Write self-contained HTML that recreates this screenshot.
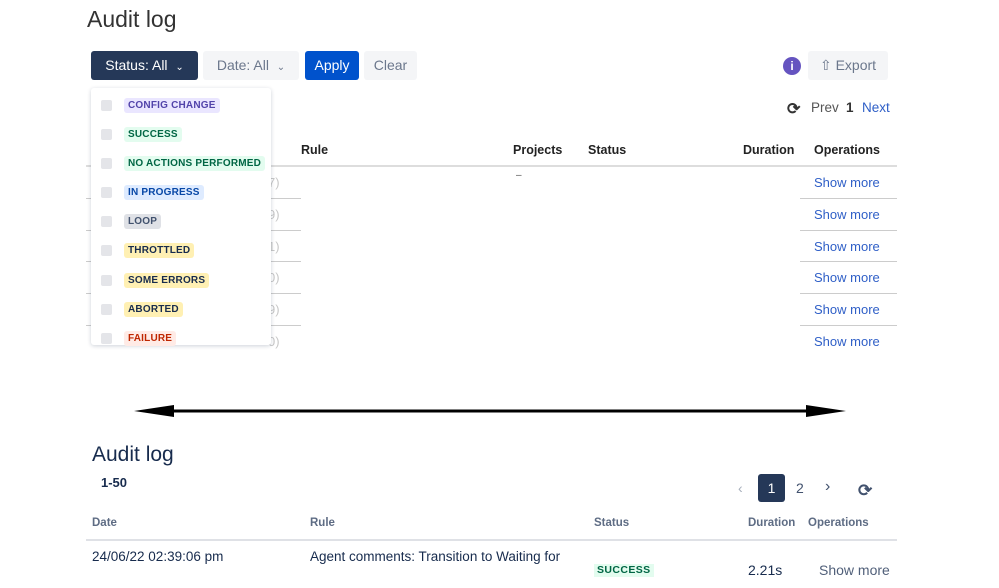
<!DOCTYPE html>
<html><head><meta charset="utf-8"><style>
*{margin:0;padding:0;box-sizing:border-box}
body{width:999px;height:588px;background:#fff;position:relative;overflow:hidden;font-family:"Liberation Sans",Arial,sans-serif;color:#172b4d}
.a{position:absolute;white-space:nowrap}
.btn{position:absolute;height:29px;border-radius:3px;font-size:14px;line-height:29px;text-align:center}
.lz{position:absolute;left:124px;font-size:10px;font-weight:bold;padding:0 4px;height:15px;line-height:15px;border-radius:3px;letter-spacing:.2px}
.cb{position:absolute;left:101px;width:11px;height:11px;border-radius:2px;background:#e4e5e9}
.th{position:absolute;font-size:12.5px;font-weight:bold;color:#222}
.sm{position:absolute;left:814px;font-size:13px;color:#2f5fc7}
.ln{position:absolute;height:1px;background:#ccc}
.g{position:absolute;left:268px;font-size:13px;color:#c8c8c8}
.bh{position:absolute;top:517px;font-size:11.5px;font-weight:bold;color:#5e6c84}
</style></head><body>
<div class="a" style="left:87px;top:6px;font-size:23px;color:#333">Audit log</div>
<div class="btn" style="left:91px;top:51px;width:107px;background:#253858;color:#fff">Status: All &nbsp;<span style="font-size:10px">&#8964;</span></div>
<div class="btn" style="left:203px;top:51px;width:96px;background:#f4f5f7;color:#6b778c">Date: All &nbsp;<span style="font-size:10px">&#8964;</span></div>
<div class="btn" style="left:305px;top:51px;width:54px;background:#0052cc;color:#fff">Apply</div>
<div class="btn" style="left:364px;top:51px;width:53px;background:#f4f5f7;color:#6b778c">Clear</div>
<div class="a" style="left:783px;top:57px;width:18px;height:18px;border-radius:50%;background:#6554c0;color:#fff;font-size:12px;font-weight:bold;text-align:center;line-height:18px">i</div>
<div class="btn" style="left:808px;top:51px;width:80px;background:#f4f5f7;color:#6b778c">&#8679; Export</div>
<div class="a" style="left:787px;top:99px;font-size:16px;font-weight:bold;color:#333">&#10227;</div>
<div class="a" style="left:811px;top:100px;font-size:13.5px;color:#555">Prev</div>
<div class="a" style="left:846px;top:100px;font-size:13.5px;font-weight:bold;color:#333">1</div>
<div class="a" style="left:862px;top:100px;font-size:13.5px;color:#2f5fc7">Next</div>
<div class="th" style="left:301px;top:143px">Rule</div>
<div class="th" style="left:513px;top:143px">Projects</div>
<div class="th" style="left:588px;top:143px">Status</div>
<div class="th" style="left:743px;top:143px">Duration</div>
<div class="th" style="left:814px;top:143px">Operations</div>
<div class="ln" style="left:86px;top:165px;width:811px;height:2px;background:#ddd"></div>
<div class="a" style="left:516px;top:170px;font-size:10px;color:#555">–</div>
<div class="ln" style="left:86px;top:198px;width:215px"></div><div class="ln" style="left:800px;top:198px;width:97px"></div>
<div class="ln" style="left:86px;top:230px;width:215px"></div><div class="ln" style="left:800px;top:230px;width:97px"></div>
<div class="ln" style="left:86px;top:261px;width:215px"></div><div class="ln" style="left:800px;top:261px;width:97px"></div>
<div class="ln" style="left:86px;top:293px;width:215px"></div><div class="ln" style="left:800px;top:293px;width:97px"></div>
<div class="ln" style="left:86px;top:325px;width:215px"></div><div class="ln" style="left:800px;top:325px;width:97px"></div>
<div class="g" style="top:175px">7)</div><div class="g" style="top:207px">9)</div><div class="g" style="top:239px">1)</div><div class="g" style="top:270px">0)</div><div class="g" style="top:302px">9)</div><div class="g" style="top:334px">0)</div>
<div class="sm" style="top:175px">Show more</div><div class="sm" style="top:207px">Show more</div><div class="sm" style="top:239px">Show more</div><div class="sm" style="top:270px">Show more</div><div class="sm" style="top:302px">Show more</div><div class="sm" style="top:334px">Show more</div>
<div class="a" style="left:91px;top:88px;width:180px;height:257px;background:#fff;box-shadow:0 1px 4px rgba(9,30,66,.2);border-radius:3px"></div>
<div class="cb" style="top:100px"></div><div class="lz" style="top:98px;background:#eae6ff;color:#5243aa">CONFIG CHANGE</div>
<div class="cb" style="top:129px"></div><div class="lz" style="top:127px;background:#e3fcef;color:#006644">SUCCESS</div>
<div class="cb" style="top:158px"></div><div class="lz" style="top:156px;background:#e3fcef;color:#006644">NO ACTIONS PERFORMED</div>
<div class="cb" style="top:187px"></div><div class="lz" style="top:185px;background:#deebff;color:#0747a6">IN PROGRESS</div>
<div class="cb" style="top:216px"></div><div class="lz" style="top:214px;background:#dfe1e6;color:#42526e">LOOP</div>
<div class="cb" style="top:245px"></div><div class="lz" style="top:243px;background:#fff0b3;color:#172b4d">THROTTLED</div>
<div class="cb" style="top:275px"></div><div class="lz" style="top:273px;background:#fff0b3;color:#172b4d">SOME ERRORS</div>
<div class="cb" style="top:304px"></div><div class="lz" style="top:302px;background:#fff0b3;color:#172b4d">ABORTED</div>
<div class="cb" style="top:333px"></div><div class="lz" style="top:331px;background:#ffebe6;color:#bf2600">FAILURE</div>
<svg class="a" style="left:130px;top:402px" width="720" height="18"><line x1="20" y1="9" x2="700" y2="9" stroke="#000" stroke-width="3"/><polygon points="4,9 44,3 44,15" fill="#000"/><polygon points="716,9 676,3 676,15" fill="#000"/></svg>
<div class="a" style="left:92px;top:443px;font-size:21px;color:#172b4d">Audit log</div>
<div class="a" style="left:101px;top:475px;font-size:13px;font-weight:bold">1-50</div>
<div class="a" style="left:738px;top:480px;font-size:14px;color:#a5adba">&lsaquo;</div>
<div class="a" style="left:758px;top:474px;width:27px;height:28px;border-radius:3px;background:#253858;color:#fff;font-size:14px;text-align:center;line-height:28px">1</div>
<div class="a" style="left:796px;top:480px;font-size:14px;color:#42526e">2</div>
<div class="a" style="left:825px;top:478px;font-size:16px;color:#42526e">&rsaquo;</div>
<div class="a" style="left:858px;top:481px;font-size:17px;font-weight:bold;color:#42526e">&#10227;</div>
<div class="bh" style="left:92px">Date</div><div class="bh" style="left:310px">Rule</div><div class="bh" style="left:594px">Status</div><div class="bh" style="left:748px">Duration</div><div class="bh" style="left:808px">Operations</div>
<div class="ln" style="left:86px;top:539px;width:811px;height:2px;background:#dfe1e6"></div>
<div class="a" style="left:92px;top:549px;font-size:13.5px">24/06/22 02:39:06 pm</div>
<div class="a" style="left:310px;top:549px;font-size:13.5px">Agent comments: Transition to Waiting for</div>
<div class="a" style="left:594px;top:564px;font-size:10.5px;font-weight:bold;background:#e3fcef;color:#006644;padding:0 3px;height:13px;line-height:13px;letter-spacing:.4px">SUCCESS</div>
<div class="a" style="left:748px;top:562px;font-size:14px">2.21s</div>
<div class="a" style="left:819px;top:562px;font-size:14px;color:#505f79">Show more</div>
</body></html>
